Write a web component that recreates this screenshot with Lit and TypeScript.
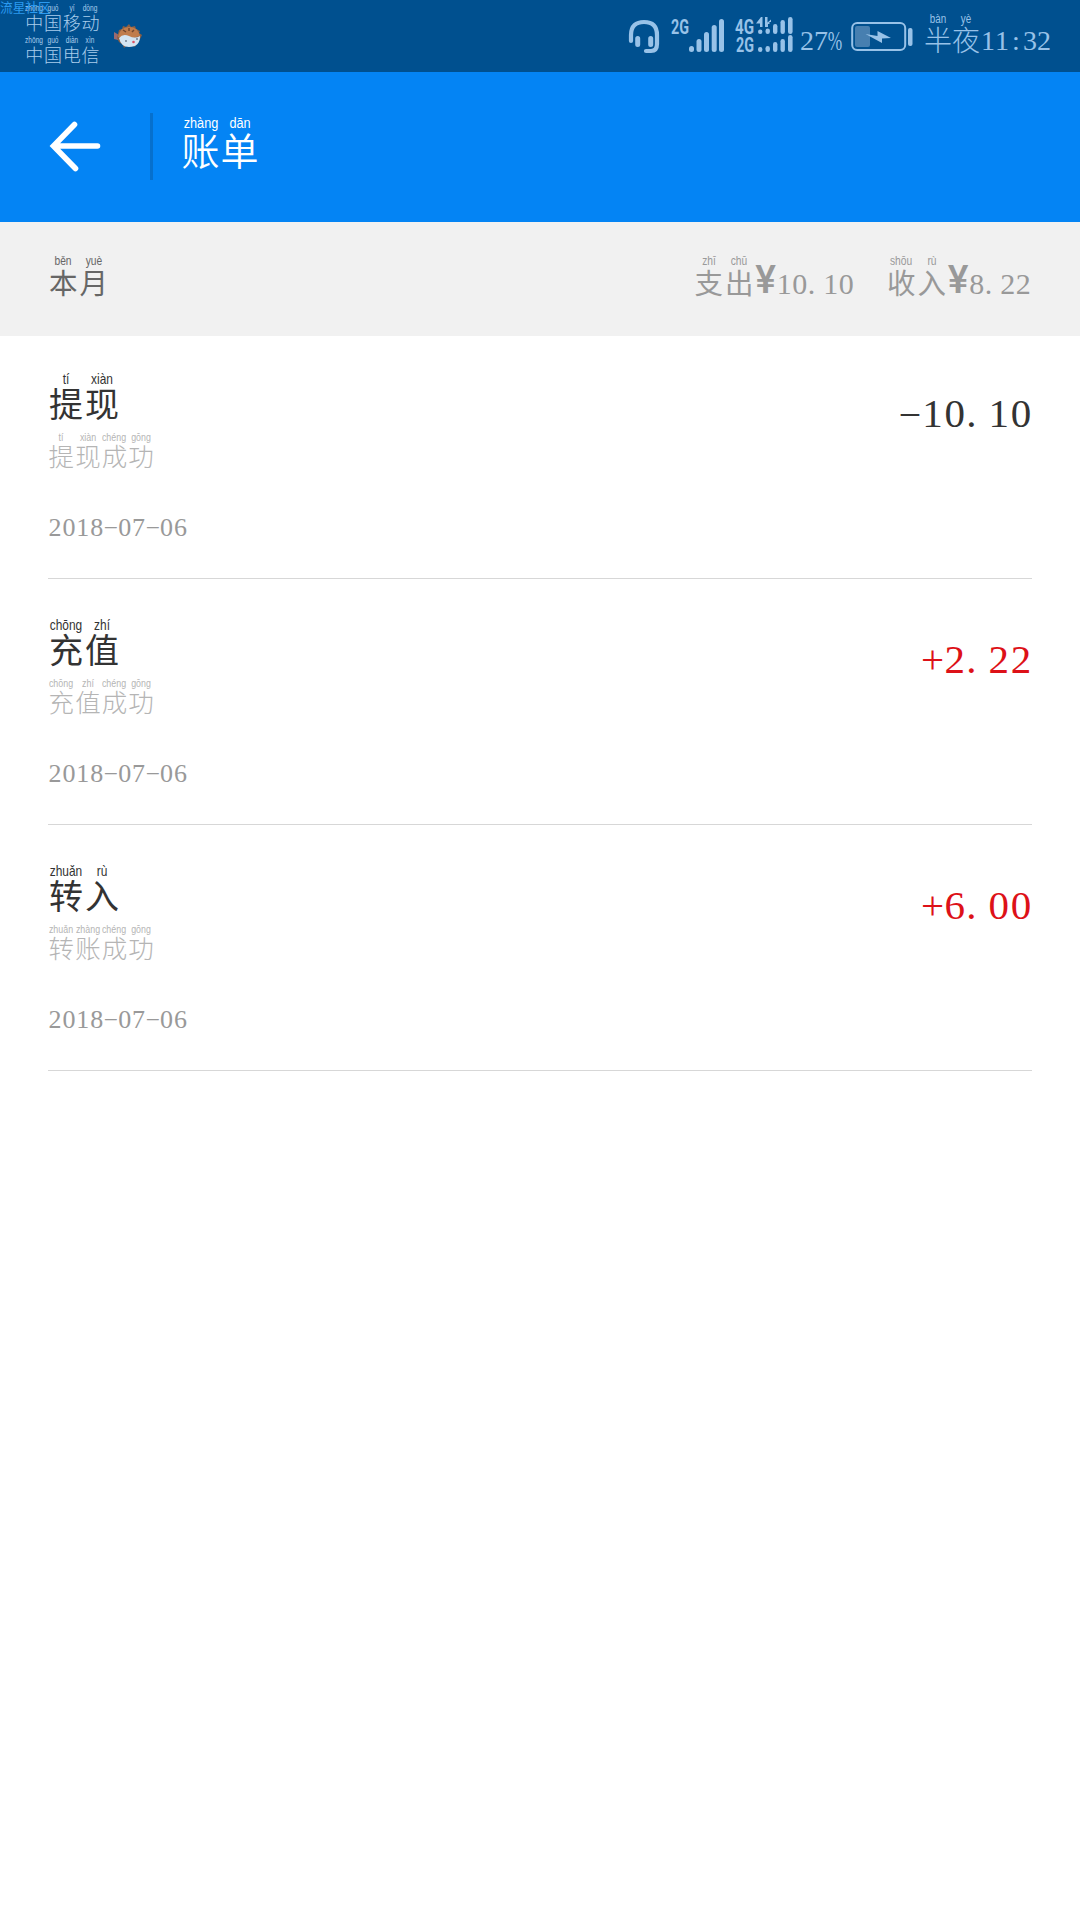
import { LitElement, html, svg, css } from "lit";
import { customElement, property } from "lit/decorators.js";

type Syllable = [string, string];

/** Hanzi with the pinyin reading of every character above it. */
@customElement("pinyin-text")
class PinyinText extends LitElement {
  @property({ attribute: false }) text: Syllable[] = [];
  static styles = css`
    :host { display: flex; flex: none; }
    .cell { display: flex; flex-direction: column; align-items: center; width: var(--cell); }
    .py {
      font: var(--pfs) / var(--ph) "Liberation Sans", sans-serif;
      white-space: nowrap;
      transform: scaleX(var(--squeeze, 0.82));
      display: flex;
      justify-content: center;
      width: 0;
    }
    .zi {
      font: var(--weight, 300) var(--fs) / var(--ch) "Noto Sans CJK SC", sans-serif;
      height: var(--ch);
      display: flex;
      justify-content: center;
      width: 0;
    }
  `;
  render() {
    return this.text.map(
      ([zi, py]) => html`<span class="cell"><span class="py">${py}</span><span class="zi">${zi}</span></span>`
    );
  }
}

/** Figures on an even pitch, where the point and the dash are as wide as a digit. */
@customElement("even-number")
class EvenNumber extends LitElement {
  @property() value = "";
  static styles = css`
    :host {
      display: block;
      flex: none;
      font: var(--fs) / var(--fs) "Liberation Serif", serif;
      white-space: nowrap;
    }
    .n { display: flex; }
    .c { width: var(--pitch); display: flex; justify-content: center; }
    .dot { justify-content: flex-start; text-indent: 0.01em; }
    .dash { transform: translateY(-0.03em) scale(1.75, 0.65); }
    .pct { transform: scaleX(0.62); }
  `;
  render() {
    const kind = (c: string) => (c === "." ? "c dot" : c === "-" ? "c dash" : c === "%" ? "c pct" : "c");
    return html`<div class="n">${[...this.value].map((c) => html`<span class=${kind(c)}>${c}</span>`)}</div>`;
  }
}

interface Bill {
  title: Syllable[];
  note: Syllable[];
  date: string;
  amount: string;
}

const success: Syllable[] = [["成", "chéng"], ["功", "gōng"]];
const bills: Bill[] = [
  {
    title: [["提", "tí"], ["现", "xiàn"]],
    note: [["提", "tí"], ["现", "xiàn"], ...success],
    date: "2018-07-06",
    amount: "-10.10",
  },
  {
    title: [["充", "chōng"], ["值", "zhí"]],
    note: [["充", "chōng"], ["值", "zhí"], ...success],
    date: "2018-07-06",
    amount: "+2.22",
  },
  {
    title: [["转", "zhuǎn"], ["入", "rù"]],
    note: [["转", "zhuǎn"], ["账", "zhàng"], ...success],
    date: "2018-07-06",
    amount: "+6.00",
  },
];

const bar = (x: number, top: number, bottom: number, w: number) =>
  svg`<rect x=${x} y=${top} width=${w} height=${bottom - top} rx=${w / 2}></rect>`;

@customElement("app-root")
class AppRoot extends LitElement {
  static styles = css`
    :host { display: block; width: 1080px; min-height: 1920px; background: #fff; overflow: hidden; }
    svg { display: block; flex: none; }

    .status { position: relative; height: 72px; box-sizing: border-box; background: #00508f; color: #98c2e8; display: flex; padding: 0 29px 0 25px; }
    .mark { position: absolute; left: 0; top: 0; font: 12.700px/13px "Noto Sans CJK SC", sans-serif; color: #2b9af0; white-space: nowrap; }
    .carriers { display: flex; flex-direction: column; gap: 4px; padding-top: 3px; color: #a9cdec; --cell: 18.7px; --fs: 18px; --pfs: 9px; --squeeze: 0.73; --ph: 10px; --ch: 18px; }
    .fish { margin: 22px 0 0 12px; }
    .tools { display: flex; margin-left: auto; }
    .headset { margin: 18px 11px 0 0; }
    .signals { margin: 14px 5px 0 0; }
    .signals text { font: bold 21px "Roboto", sans-serif; }
    .pct { margin: 27px 9px 0 0; --fs: 28px; --pitch: 14px; }
    .battery { margin: 21px 11px 0 0; }
    .night { margin-top: 13px; --cell: 28px; --fs: 28px; --pfs: 12px; --ph: 13px; --ch: 27px; }
    .clock { margin: 27px 0 0 1px; --fs: 28px; --pitch: 14px; }

    .header { height: 150px; box-sizing: border-box; background: #0484f4; color: #fff; display: flex; padding-left: 49px; }
    .back { margin-top: 48px; }
    .rule { width: 3px; height: 67px; margin: 41px 28px 0 49px; background: #0670cd; }
    .title { margin-top: 43px; --weight: 350; --cell: 39px; --fs: 38px; --pfs: 15.5px; --ph: 16px; --ch: 35px; }

    .summary { height: 114px; box-sizing: border-box; background: #f1f1f1; display: flex; padding: 32px 49px 0 48px; color: #999; --weight: 400; --cell: 30.5px; --fs: 28.5px; --pfs: 12.5px; --ph: 14px; --ch: 27px; }
    .month { color: #666; }
    .totals { display: flex; margin-left: auto; gap: 32px; }
    .total { display: flex; gap: 2px; }
    .figure { display: flex; }
    .yen { font: 500 39px/40px "Roboto", sans-serif; width: 20px; margin: 6px 1px 0 -1px; display: flex; justify-content: center; }
    .sum { margin-top: 15px; --fs: 30px; --pitch: 15.5px; }

    .bill { display: flex; justify-content: space-between; height: 246px; box-sizing: border-box; margin: 0 48px; padding-top: 38px; border-bottom: 1px solid #d7d7d7; }
    .bill:first-child { height: 243px; padding-top: 35px; }
    .name { color: #333; --weight: 400; --cell: 36px; --fs: 34px; --pfs: 14.5px; --ph: 16px; --ch: 32px; }
    .note { margin-top: 12px; color: #b5b5b5; --cell: 26.6px; --fs: 25.5px; --pfs: 11.5px; --squeeze: 0.77; --ph: 12px; --ch: 24px; }
    .date { margin-top: 48px; color: #999; --fs: 26px; --pitch: 13.95px; }
    .amount { margin-top: 22px; color: #333; --fs: 41px; --pitch: 22.1px; }
    .in { color: #dd1118; }
  `;

  render() {
    return html`
      <div class="status">
        <div class="carriers">
          <pinyin-text .text=${[["中", "zhōng"], ["国", "guó"], ["移", "yí"], ["动", "dòng"]]}></pinyin-text>
          <pinyin-text .text=${[["中", "zhōng"], ["国", "guó"], ["电", "diàn"], ["信", "xìn"]]}></pinyin-text>
        </div>
        <svg class="fish" width="32" height="28" viewBox="0 0 32 28">
          <path d="M2 10l5 3-1 5-4-1z" fill="#9b6a70"></path>
          <path d="M5 16L7 8l3-1 1-3 3 1 3-3 2 3 4-1 1 3 4 2-1 2 3 2-3 6-3 3-1 3-3-2-6 1-2 2-1-3-4-3z" fill="#8a5f45"></path>
          <path d="M6 15Q8 5 17 5q9 0 11 9l-8 2z" fill="#c07c4c"></path>
          <path d="M7 16q4-5 10-2t11 0q0 11-11 11-8 0-10-9z" fill="#d3e4f2"></path>
          <path d="M11 8l3 2M17 6v3M22 8l-2 2" stroke="#70452e" stroke-width="1.500"></path>
          <circle cx="14" cy="19" r="0.900" fill="#66758a"></circle><circle cx="25" cy="17" r="0.900" fill="#66758a"></circle>
          <circle cx="21.500" cy="20" r="1.300" fill="#dc5264"></circle>
        </svg>
        <div class="tools">
          <svg class="headset" width="32" height="38" viewBox="0 0 32 38" fill="none" stroke="currentColor" stroke-linecap="round">
            <path d="M3 23V17C3 8 8 4 16 4s13 4 13 13v9q0 7-6 7h-5" stroke-width="4.200"></path>
            <path d="M9.700 20.500v6M22.700 20.500v6" stroke-width="5"></path>
          </svg>
          <svg class="signals" width="124" height="42" viewBox="0 0 124 42" fill="currentColor">
            <text x="0" y="19.800" textLength="18" lengthAdjust="spacingAndGlyphs">2G</text>
            ${bar(18, 32, 38, 5)}${bar(25.5, 25, 38, 5)}${bar(33, 18, 38, 5)}${bar(40.7, 11, 38, 5)}${bar(48, 5, 38, 5)}
            <text x="64" y="19.800" textLength="19" lengthAdjust="spacingAndGlyphs">4G</text>
            <text x="65" y="38" textLength="18" lengthAdjust="spacingAndGlyphs">2G</text>
            ${bar(87, 15.5, 20, 4.4)}${bar(94.5, 14.5, 20, 4.4)}${bar(102, 10, 20, 4.4)}${bar(109.5, 6, 20, 4.4)}${bar(117, 3, 20, 4.6)}
            <path d="M90 3h1.500v10h-2.500V9.500h-4zM94 3h2.500v5.500l3.500-3v2.500h-1.500v2h-1.500v3H94z"></path>
            ${bar(87, 33, 38, 4.4)}${bar(94.5, 32, 38, 4.4)}${bar(102, 28, 38, 4.4)}${bar(109.5, 25, 38, 4.4)}${bar(117, 21, 38, 4.6)}
          </svg>
          <even-number class="pct" value="27%"></even-number>
          <svg class="battery" width="62" height="32" viewBox="0 0 62 32" fill="none">
            <rect x="1.200" y="2" width="53" height="27" rx="5" stroke="currentColor" stroke-width="2"></rect>
            <rect x="4" y="5" width="15" height="21" rx="2" fill="#477fb0"></rect>
            <path d="M14.500 13l12 2V10l13.500 7-9 .5V22z" fill="currentColor"></path>
            <rect x="57" y="7" width="4.500" height="18" rx="2" fill="currentColor"></rect>
          </svg>
          <pinyin-text class="night" .text=${[["半", "bàn"], ["夜", "yè"]]}></pinyin-text>
          <even-number class="clock" value="11:32"></even-number>
        </div>
        <span class="mark">流星社区</span>
      </div>

      <div class="header">
        <svg class="back" width="52" height="52" viewBox="0 0 52 52" fill="none" stroke="#fff" stroke-width="5.600" stroke-linecap="round">
          <path d="M25.500 4.500L4.500 26L26.500 48.500M5 26H48.500"></path>
        </svg>
        <div class="rule"></div>
        <pinyin-text class="title" .text=${[["账", "zhàng"], ["单", "dān"]]}></pinyin-text>
      </div>

      <div class="summary">
        <pinyin-text class="month" .text=${[["本", "běn"], ["月", "yuè"]]}></pinyin-text>
        <div class="totals">
          <div class="total">
            <pinyin-text .text=${[["支", "zhī"], ["出", "chū"]]}></pinyin-text>
            <div class="figure"><span class="yen">¥</span><even-number class="sum" value="10.10"></even-number></div>
          </div>
          <div class="total">
            <pinyin-text .text=${[["收", "shōu"], ["入", "rù"]]}></pinyin-text>
            <div class="figure"><span class="yen">¥</span><even-number class="sum" value="8.22"></even-number></div>
          </div>
        </div>
      </div>

      <div class="list">
        ${bills.map(
          (b) => html`<div class="bill">
            <div>
              <pinyin-text class="name" .text=${b.title}></pinyin-text>
              <pinyin-text class="note" .text=${b.note}></pinyin-text>
              <even-number class="date" value=${b.date}></even-number>
            </div>
            <even-number class="amount ${b.amount.startsWith("+") ? "in" : ""}" value=${b.amount}></even-number>
          </div>`
        )}
      </div>
    `;
  }
}
